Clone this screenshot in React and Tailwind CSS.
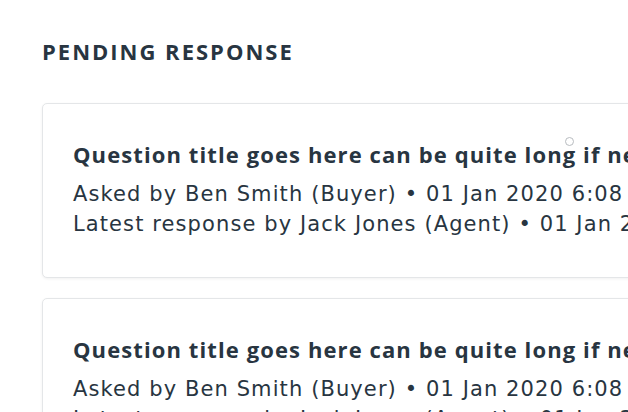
const questions = [
  {
    title: 'Question title goes here can be quite long if needed to be',
    asked: 'Asked by Ben Smith (Buyer) • 01 Jan 2020 6:08 PM',
    latest: 'Latest response by Jack Jones (Agent) • 01 Jan 2020 6:08 PM',
  },
  {
    title: 'Question title goes here can be quite long if needed to be',
    asked: 'Asked by Ben Smith (Buyer) • 01 Jan 2020 6:08 PM',
    latest: 'Latest response by Jack Jones (Agent) • 01 Jan 2020 6:08 PM',
  },
]

export default function App() {
  return (
    <div
      className="h-[412px] w-[628px] overflow-hidden bg-white text-[#283541]"
      style={{ fontFamily: '"Open Sans", "Noto Sans", sans-serif' }}
    >
      <div className="pl-[42px] pt-[37px]">
        <h2 className="text-[22px] font-bold leading-[28px] tracking-[2px]">PENDING RESPONSE</h2>

        <div className="mt-[38px] flex flex-col gap-[20px]">
          {questions.map((q, i) => (
            <div
              key={i}
              className="relative w-[640px] rounded-[5px] border border-[#e4e6e8] bg-white pb-[38px] pl-[30px] pt-[36px] shadow-[0_1px_3px_rgba(0,0,0,0.06)]"
            >
              {i === 0 && (
                <span className="absolute left-[522px] top-[33px] h-[9px] w-[9px] rounded-full border border-[#b8bcc0] bg-white" />
              )}
              <h3 className="whitespace-nowrap text-[22px] font-bold leading-[28px] tracking-[1.1px]">{q.title}</h3>
              <p
                className="mt-[11px] whitespace-nowrap text-[21px] leading-[30px] tracking-[1.1px]"
                style={{ fontFamily: '"DejaVu Sans", sans-serif' }}
              >
                {q.asked}
              </p>
              <p
                className="whitespace-nowrap text-[21px] leading-[30px] tracking-[1.1px]"
                style={{ fontFamily: '"DejaVu Sans", sans-serif' }}
              >
                {q.latest}
              </p>
            </div>
          ))}
        </div>
      </div>
    </div>
  )
}
